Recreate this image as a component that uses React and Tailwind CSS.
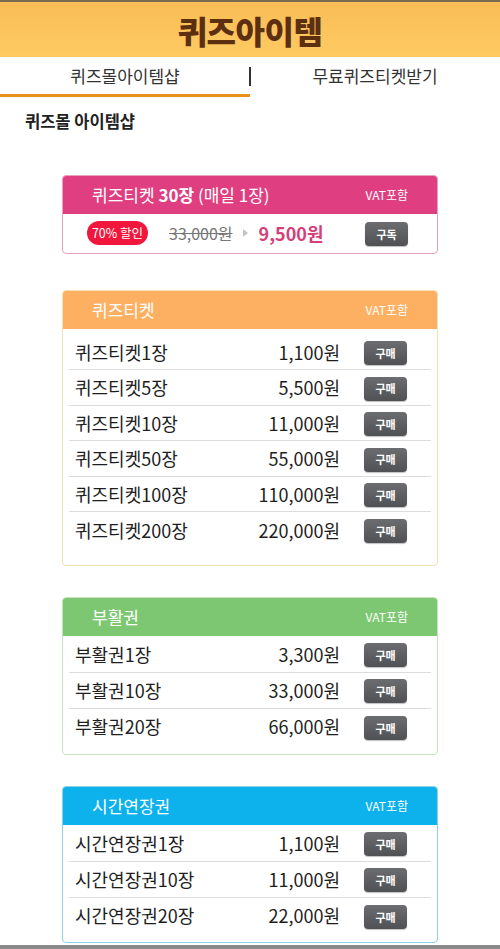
import React from "react";

const font = { fontFamily: '"Noto Sans CJK KR", "Noto Sans", sans-serif' };

const sections = [
  {
    title: "퀴즈티켓",
    head: "bg-[#fdb062]",
    border: "border-[#f3dfb8]",
    body: "pt-[6px] pb-[17px]",
    row: "h-[35.5px]",
    items: [
      ["퀴즈티켓1장", "1,100원"],
      ["퀴즈티켓5장", "5,500원"],
      ["퀴즈티켓10장", "11,000원"],
      ["퀴즈티켓50장", "55,000원"],
      ["퀴즈티켓100장", "110,000원"],
      ["퀴즈티켓200장", "220,000원"],
    ],
    gap: "mt-[36px]",
  },
  {
    title: "부활권",
    head: "bg-[#7dc772]",
    border: "border-[#c5e5bf]",
    body: "pt-[1px] pb-[9px]",
    row: "h-[36px]",
    items: [
      ["부활권1장", "3,300원"],
      ["부활권10장", "33,000원"],
      ["부활권20장", "66,000원"],
    ],
    gap: "mt-[31px]",
  },
  {
    title: "시간연장권",
    head: "bg-[#0db1ec]",
    border: "border-[#8fd0e0]",
    body: "pt-[1px] pb-[8px]",
    row: "h-[36px]",
    items: [
      ["시간연장권1장", "1,100원"],
      ["시간연장권10장", "11,000원"],
      ["시간연장권20장", "22,000원"],
    ],
    gap: "mt-[31px]",
  },
];

function Btn({ label }) {
  return (
    <button className="w-[43px] h-[24px] rounded-[4px] bg-gradient-to-b from-[#6c6d71] to-[#505155] text-white text-[11px] font-bold shadow-[0_1px_1px_rgba(0,0,0,0.25)]">
      {label}
    </button>
  );
}

function Head({ children, bg }) {
  return (
    <div className={`${bg} h-[38px] flex items-center justify-between pl-[29px] pr-[29px] text-white rounded-t-[3px]`}>
      <div className="text-[17px]">{children}</div>
      <div className="text-[12px]">VAT포함</div>
    </div>
  );
}

export default function App() {
  return (
    <div style={font} className="w-[500px] min-h-[949px] bg-white flex flex-col text-[#222]">
      <div className="h-[57px] border-t-[2px] border-[#7b6a4f] bg-gradient-to-b from-[#f9bd55] to-[#ffca63] flex items-center justify-center">
        <h1 className="text-[32px] font-black text-[#5c2f10] tracking-[-0.5px]">퀴즈아이템</h1>
      </div>

      <div className="h-[40px] flex relative">
        <div className="w-[250px] flex items-center justify-center border-b-[3px] border-[#e8911d] text-[17px] text-[#333]">
          퀴즈몰아이템샵
        </div>
        <div className="absolute left-[249px] top-[10px] h-[19px] w-[1.5px] bg-[#333]" />
        <div className="w-[250px] flex items-center justify-center pb-[3px] text-[17px] text-[#333]">
          무료퀴즈티켓받기
        </div>
      </div>

      <div className="pl-[25px] mt-[12px] text-[16.5px] font-bold text-[#222]">퀴즈몰 아이템샵</div>

      <div className="mx-[62px] mt-[41px] border border-[#e6a3c0] rounded-[4px]">
        <Head bg="bg-[#df3f80]">
          퀴즈티켓 <span className="font-bold">30장</span> (매일 1장)
        </Head>
        <div className="h-[39px] flex items-center pl-[24px] pr-[29px]">
          <span className="w-[61px] h-[24px] rounded-full bg-[#f1163c] text-white text-[12.5px] flex items-center justify-center">
            70% 할인
          </span>
          <span className="ml-[21px] text-[16px] text-[#777] line-through">33,000원</span>
          <span className="ml-[10px] w-0 h-0 border-y-[4px] border-y-transparent border-l-[5px] border-l-[#c4c4c4]" />
          <span className="ml-[11px] text-[18px] font-bold text-[#d63f79]">9,500원</span>
          <span className="ml-auto">
            <Btn label="구독" />
          </span>
        </div>
      </div>

      {sections.map((s) => (
        <div key={s.title} className={`mx-[62px] ${s.gap} border ${s.border} rounded-[4px]`}>
          <Head bg={s.head}>{s.title}</Head>
          <div className={`px-[6px] ${s.body}`}>
            {s.items.map(([name, price], i) => (
              <div
                key={name}
                className={`${s.row} flex items-center pl-[6px] ${i < s.items.length - 1 ? "border-b border-[#dcdcdc]" : ""}`}
              >
                <span className="flex-1 text-[18px] text-[#1e1e1e]">{name}</span>
                <span className="text-[18px] text-[#1e1e1e]">{price}</span>
                <span className="ml-[24px] mr-[24px]">
                  <Btn label="구매" />
                </span>
              </div>
            ))}
          </div>
        </div>
      ))}

      <div className="mt-auto h-[4px] bg-[#8a8a8a]" />
    </div>
  );
}
